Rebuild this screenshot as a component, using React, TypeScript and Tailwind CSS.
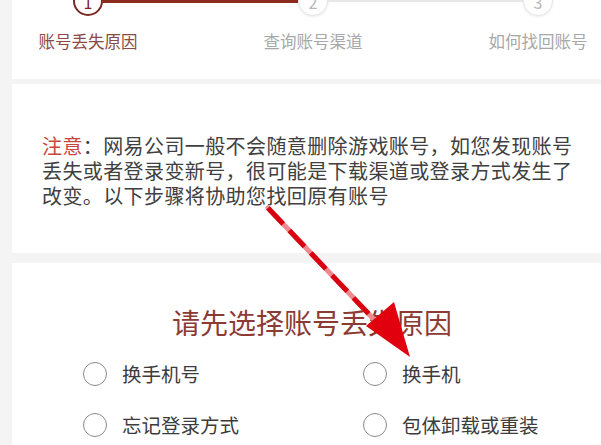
import React from 'react';

const font = { fontFamily: '"Noto Sans CJK SC", "Noto Sans", sans-serif' };

const steps = [
  { n: '1', label: '账号丢失原因', active: true },
  { n: '2', label: '查询账号渠道', active: false },
  { n: '3', label: '如何找回账号', active: false },
];

const reasons = ['换手机号', '换手机', '忘记登录方式', '包体卸载或重装'];

const StepCircle: React.FC<{ n: string; active: boolean }> = ({ n, active }) => (
  <div
    className={
      active
        ? 'w-[30px] h-[30px] rounded-full border-[2.5px] border-[#7a2a22] bg-white flex items-center justify-center text-[16px] text-[#7a2a22] shrink-0'
        : 'w-[30px] h-[30px] rounded-full border border-[#e6e6e6] bg-white flex items-center justify-center text-[16px] text-[#b8b8b8] shrink-0 shadow-[0_1px_3px_rgba(0,0,0,0.08)]'
    }
  >
    <span className="leading-none pt-[2px]">{n}</span>
  </div>
);

export default function App() {
  return (
    <div className="relative w-[601px] h-[445px] overflow-hidden bg-[#f4f4f4] pl-[12px] flex flex-col" style={font}>
      {/* stepper */}
      <div className="h-[79px] shrink-0 bg-white flex flex-col">
        <div className="flex items-center pl-[61px] -mt-[14px]">
          <StepCircle n="1" active />
          <div className="w-[195px] h-[3px] bg-[#8b2c1f]" />
          <StepCircle n="2" active={false} />
          <div className="w-[195px] h-[2px] bg-[#e8e8e8]" />
          <StepCircle n="3" active={false} />
        </div>
        <div className="flex pl-[26px] gap-[125px] mt-[13px]">
          {steps.map((s) => (
            <div
              key={s.n}
              className={
                s.active
                  ? 'w-[100px] text-center text-[16.5px] leading-[24px] text-[#8c4a44] whitespace-nowrap'
                  : 'w-[100px] text-center text-[16.5px] leading-[24px] text-[#a8a8a8] whitespace-nowrap'
              }
            >
              {s.label}
            </div>
          ))}
        </div>
      </div>

      {/* notice */}
      <div className="mt-[5px] h-[169px] shrink-0 bg-white pt-[49px] pl-[30px] text-[20px] leading-[25px] tracking-[0.4px] text-[#404040]">
        <p className="whitespace-nowrap">
          <span className="text-[#c8473c]">注意</span>：网易公司一般不会随意删除游戏账号，如您发现账号
        </p>
        <p className="whitespace-nowrap">丢失或者登录变新号，很可能是下载渠道或登录方式发生了</p>
        <p className="whitespace-nowrap">改变。以下步骤将协助您找回原有账号</p>
      </div>

      {/* reasons */}
      <div className="mt-[10px] flex-1 bg-white pt-[41px]">
        <h2 className="text-center pl-[11px] text-[28px] leading-[36px] text-[#8b3b33]">请先选择账号丢失原因</h2>
        <div className="grid grid-cols-[280px_280px] pl-[71px] mt-[19px] gap-y-[21px]">
          {reasons.map((r) => (
            <label key={r} className="flex items-center h-[30px] gap-[15px]">
              <span className="w-[24px] h-[24px] rounded-full border-[1.5px] border-[#8a8a8a] bg-white shrink-0" />
              <span className="text-[19.5px] leading-[30px] text-[#3c3c3c] whitespace-nowrap">{r}</span>
            </label>
          ))}
        </div>
      </div>

      {/* red annotation arrow */}
      <svg className="absolute left-0 top-0 pointer-events-none" width="601" height="445" viewBox="0 0 601 445">
        <line x1="268" y1="208" x2="384" y2="330" stroke="#ec8a8f" strokeWidth="5" strokeLinecap="round" />
        <line x1="268" y1="208" x2="384" y2="330" stroke="#d9000f" strokeWidth="5" strokeDasharray="22 9" />
        <polygon points="410,357 366,326 394,302" fill="#e0000e" />
      </svg>
    </div>
  );
}
